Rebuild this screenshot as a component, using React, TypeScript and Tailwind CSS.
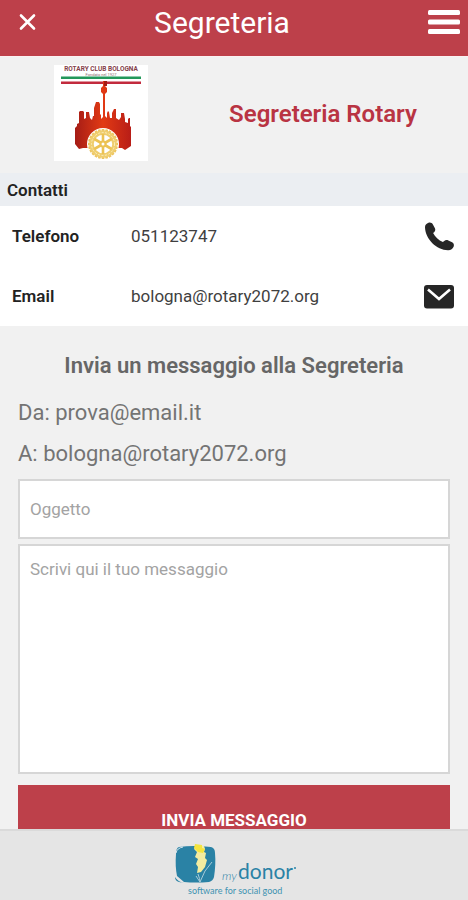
import React from "react";

function CloseIcon() {
  return (
    <svg className="size-6" viewBox="0 0 24 24" fill="none" stroke="white" strokeWidth="2.6" strokeLinecap="round" aria-hidden="true">
      <path d="M5 4.5 18 17.500M18 4.500 5 17.500" />
    </svg>
  );
}

function MenuIcon() {
  return (
    <svg className="h-7 w-8" viewBox="0 0 32 28" fill="white" aria-hidden="true">
      <rect x="0" y="1" width="32" height="5" rx="1.500" />
      <rect x="0" y="10.500" width="32" height="5" rx="1.500" />
      <rect x="0" y="20" width="32" height="5" rx="1.500" />
    </svg>
  );
}

function PhoneIcon() {
  return (
    <svg className="size-8" viewBox="0 0 32 32" fill="#262626" aria-hidden="true">
      <path d="M2 6.500C1.800 4 3.500 2.600 5.500 1.800c1.800-.6 3.500.1 4.400 1.700l1.900 3.600c.8 1.500.6 3-.7 4.100l-1 .9c1.900 4 5.500 7.300 9.800 9l1.300-1.100c1.200-1 2.700-1.200 4.100-.5l3.800 1.800c1.600.8 2.200 2.600 1.600 4.200-.9 2.400-3 3.900-5.700 3.800C13.500 28.700 2.600 18.500 2 6.500Z" />
    </svg>
  );
}

function MailIcon() {
  return (
    <svg className="size-8" viewBox="0 0 32 32" aria-hidden="true">
      <rect x="1" y="4" width="30" height="23.500" rx="3" fill="#262626" />
      <path d="m5 8.500 11 9.500 11-9.500" fill="none" stroke="white" strokeWidth="2.600" />
    </svg>
  );
}

function ClubLogo() {
  const teeth = Array.from({ length: 24 }, (_, i) => i * 15);
  return (
    <svg className="h-24 w-[94px] bg-white" viewBox="0 0 94 96" role="img" aria-label="Rotary Club Bologna">
      <defs>
        <linearGradient id="club-red" x1="0" x2="1" y1="0" y2="0">
          <stop offset="0" stopColor="#a51c16" />
          <stop offset="0.500" stopColor="#e23a14" />
          <stop offset="1" stopColor="#b81d17" />
        </linearGradient>
      </defs>
      <text x="47" y="6" textAnchor="middle" fontSize="6.500" fontWeight="700" fill="#84414a" fontFamily="Roboto, sans-serif">ROTARY CLUB BOLOGNA</text>
      <text x="47" y="10.500" textAnchor="middle" fontSize="4" fill="#8d6a6d" fontFamily="Roboto, sans-serif">Fondato nel 1927</text>
      <rect x="7" y="11.500" width="80" height="2.500" fill="#23985a" />
      <rect x="7" y="16.500" width="80" height="2.500" fill="#c22a3d" />
      <path
        d="M21 79V63l2-2v-2l2-1V47l1-1h3l1 1v7l2-1v-6h3l1 6 2 2 1-4h1V43l2-6h3l1 2v10l1 1v4l2-2V29l-2-2v-4l2-2V16h2v5l2 2v4l-2 2v22l2 2v-5l1-2 1 1 1 6h2v-5l2-4h2v9l3 2 2-3v-4h3l1 6v3l3 1v-4l1-1h1v8l1 1v19l-6 4-3-2H29l-4 1Z"
        fill="url(#club-red)"
      />
      <path d="M50 16h3v5h-3Z" fill="#a51c16" />
      <circle cx="49" cy="79" r="16" fill="white" />
      {teeth.map((angle) => (
        <rect key={angle} x="47.700" y="64" width="2.600" height="4" fill="#edc45d" transform={`rotate(${angle} 49 79)`} />
      ))}
      <circle cx="49" cy="79" r="11.500" fill="none" stroke="#efcd6e" strokeWidth="4.500" />
      <circle cx="49" cy="79" r="11.500" fill="none" stroke="#fbeebb" strokeWidth="1" strokeDasharray="2 1.500" />
      {[0, 60, 120].map((angle) => (
        <path key={angle} d="M49 69v20" stroke="#ecc253" strokeWidth="2.600" transform={`rotate(${angle} 49 79)`} />
      ))}
      <circle cx="49" cy="79" r="3.500" fill="#ecc253" />
      <circle cx="49" cy="79" r="1.500" fill="white" />
    </svg>
  );
}

function DonorLogo() {
  return (
    <svg className="h-14 w-32" viewBox="0 0 128 56" role="img" aria-label="mydonor, software for social good">
      <path d="M9 4q14-2 32 0 4 1 4 6 1 11-1 24-1 4-5 5-13 1-25 0l-7-6q-2-10-1-22 0-6 3-7Z" fill="#2a82a5" />
      <path d="M6 10q1-5 7-6" fill="none" stroke="#d7e6ec" strokeWidth="1" />
      <path d="M5 34q3 5 9 6l-5-1q-4-1-4-5Z" fill="#2a82a5" />
      <path d="m26 2 8 1 1 3-1 3 2 1-1 5 2 2-2 7-4 5-4 1 1-6-2-3 2-5-3-2 2-5-3-3Z" fill="#f3eca0" />
      <path d="m25 1 7 1v3l3 1-2 4-5-1-4-4Z" fill="#f4e43f" />
      <path d="M28 31q2 5 2 8 4-12 12-20M26 33l4 6" fill="none" stroke="#a7cbd8" strokeWidth="1" />
      <text x="52" y="37" fontSize="12" fontStyle="italic" fontWeight="300" fill="#2a82a5" fontFamily="Lato, sans-serif">my</text>
      <text x="68" y="36" fontSize="21" fill="#2a82a5" fontFamily="Lato, sans-serif">donor</text>
      <circle cx="125" cy="25" r="1" fill="#2a82a5" />
      <text x="18" y="51" fontSize="9" fill="#3f93b1" fontFamily="Lato, sans-serif">software for social good</text>
    </svg>
  );
}

interface ContactRowProps {
  label: string;
  value: string;
  href: string;
  icon: React.ReactNode;
}

function ContactRow({ label, value, href, icon }: ContactRowProps) {
  return (
    <div className="flex h-15 items-center px-3 pt-0.5 pr-[13px] text-[17px]">
      <dt className="w-[119px] font-semibold text-[#222222]">{label}</dt>
      <dd className="flex flex-1 items-center justify-between text-[#3f3f3f]">
        <span>{value}</span>
        <a href={href} aria-label={label}>{icon}</a>
      </dd>
    </div>
  );
}

export default function App() {
  return (
    <div className="flex h-screen flex-col bg-[#f1f1f1] font-['Roboto',sans-serif]">
      <header className="flex h-14 shrink-0 items-center bg-[#bd404a] pb-2.5 text-white">
        <button type="button" aria-label="Chiudi" className="flex w-10 justify-end">
          <CloseIcon />
        </button>
        <h1 className="flex-1 text-center text-[30px] leading-10">Segreteria</h1>
        <button type="button" aria-label="Menu" className="flex w-16 justify-end pr-2">
          <MenuIcon />
        </button>
      </header>

      <main className="min-h-0 flex-1 overflow-hidden">
        <section className="flex h-[117px] items-center border-t border-[#faf1f2] pb-1">
          <div className="flex w-[178px] justify-center pl-6">
            <ClubLogo />
          </div>
          <h2 className="flex-1 pt-0.5 text-center text-2xl font-semibold text-[#b93443]">Segreteria Rotary</h2>
        </section>

        <section>
          <h3 className="bg-[#ebeef2] px-[7px] pt-[5px] pb-1 text-[17px] leading-6 font-semibold text-[#222222]">Contatti</h3>
          <dl className="bg-white">
            <ContactRow label="Telefono" value="051123747" href="tel:051123747" icon={<PhoneIcon />} />
            <ContactRow label="Email" value="bologna@rotary2072.org" href="mailto:bologna@rotary2072.org" icon={<MailIcon />} />
          </dl>
        </section>

        <form className="flex flex-col px-[18px] pt-6">
          <h3 className="text-center text-[22px] leading-8 font-semibold text-[#666666]">Invia un messaggio alla Segreteria</h3>
          <div className="pt-2.5 pb-[5px] text-[22px] leading-[41px] text-[#747474]">
            <p>Da: prova@email.it</p>
            <p>A: bologna@rotary2072.org</p>
          </div>
          <input
            type="text"
            aria-label="Oggetto"
            placeholder="Oggetto"
            className="h-15 rounded-none border-2 border-[#d6d6d6] bg-white px-2.5 text-[17px] placeholder:text-[#a3a3a3]"
          />
          <textarea
            aria-label="Messaggio"
            placeholder="Scrivi qui il tuo messaggio"
            className="mt-[5px] h-[230px] resize-none rounded-none border-2 border-[#d6d6d6] bg-white px-2.5 py-[11px] text-[17px] placeholder:text-[#a3a3a3]"
          />
          <button type="submit" className="mt-[11px] h-[72px] shrink-0 bg-[#bd404a] text-[17px] font-bold text-white">
            INVIA MESSAGGIO
          </button>
        </form>
      </main>

      <footer className="flex h-[71px] shrink-0 justify-center border-t-2 border-[#dadada] bg-[#e5e5e5] pt-3">
        <DonorLogo />
      </footer>
    </div>
  );
}
